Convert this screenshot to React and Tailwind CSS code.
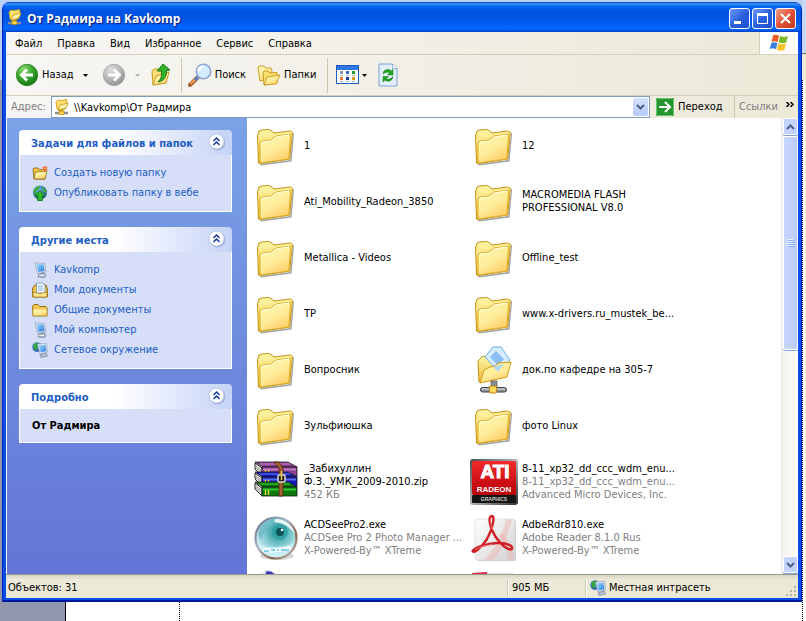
import React, { useState } from 'react';

const taskLinks = [
  { label: 'Создать новую папку', icon: 'newFolder' },
  { label: 'Опубликовать папку в вебе', icon: 'publish' },
];

const placeLinks = [
  { label: 'Kavkomp', icon: 'computer' },
  { label: 'Мои документы', icon: 'documents' },
  { label: 'Общие документы', icon: 'folder' },
  { label: 'Мой компьютер', icon: 'computer' },
  { label: 'Сетевое окружение', icon: 'network' },
];

const files = [
  { lines: ['1'], icon: 'folder' },
  { lines: ['12'], icon: 'folder' },
  { lines: ['Ati_Mobility_Radeon_3850'], icon: 'folder' },
  { lines: ['MACROMEDIA FLASH', 'PROFESSIONAL V8.0'], icon: 'folder' },
  { lines: ['Metallica - Videos'], icon: 'folder' },
  { lines: ['Offline_test'], icon: 'folder' },
  { lines: ['TP'], icon: 'folder' },
  { lines: ['www.x-drivers.ru_mustek_be...'], icon: 'folder' },
  { lines: ['Вопросник'], icon: 'folder' },
  { lines: ['док.по кафедре на 305-7'], icon: 'shared' },
  { lines: ['Зульфиюшка'], icon: 'folder' },
  { lines: ['фото Linux'], icon: 'folder' },
  { lines: ['_Забихуллин', 'Ф.З._УМК_2009-2010.zip'], info: ['452 КБ'], icon: 'rar' },
  {
    lines: ['8-11_xp32_dd_ccc_wdm_enu...'],
    info: ['8-11_xp32_dd_ccc_wdm_enu...', 'Advanced Micro Devices, Inc.'],
    icon: 'ati',
  },
  {
    lines: ['ACDSeePro2.exe'],
    info: ['ACDSee Pro 2 Photo Manager ...', 'X-Powered-By™ XTreme'],
    icon: 'acdsee',
  },
  {
    lines: ['AdbeRdr810.exe'],
    info: ['Adobe Reader 8.1.0 Rus', 'X-Powered-By™ XTreme'],
    icon: 'adobe',
  },
  { lines: [], icon: 'disc' },
  { lines: [], icon: 'redBox' },
];

// Gradients shared by all the icons
const IconDefs = () => (
  <svg className="absolute h-0 w-0" aria-hidden="true">
    <defs>
      <linearGradient id="front" x1="0" y1="0" x2="0.6" y2="1">
        <stop offset="0" stopColor="#fffbb4" />
        <stop offset="0.6" stopColor="#ffec9a" />
        <stop offset="1" stopColor="#ffcf6a" />
      </linearGradient>
      <linearGradient id="back" x1="0" y1="0" x2="0" y2="1">
        <stop offset="0" stopColor="#fff7a8" />
        <stop offset="1" stopColor="#eebb3e" />
      </linearGradient>
      <radialGradient id="green" cx="0.35" cy="0.25" r="0.8">
        <stop offset="0" stopColor="#8fdc78" />
        <stop offset="0.5" stopColor="#36a929" />
        <stop offset="1" stopColor="#15700f" />
      </radialGradient>
      <radialGradient id="grey" cx="0.35" cy="0.25" r="0.8">
        <stop offset="0" stopColor="#dedede" />
        <stop offset="0.6" stopColor="#b3b3b3" />
        <stop offset="1" stopColor="#8f8f8f" />
      </radialGradient>
      <linearGradient id="screen" x1="0" y1="0" x2="1" y2="1">
        <stop offset="0" stopColor="#9fdcff" />
        <stop offset="1" stopColor="#2a7be0" />
      </linearGradient>
      <radialGradient id="globe" cx="0.4" cy="0.3" r="0.8">
        <stop offset="0" stopColor="#6fb7f2" />
        <stop offset="1" stopColor="#123f9a" />
      </radialGradient>
      <radialGradient id="eye" cx="0.55" cy="0.35" r="0.7">
        <stop offset="0" stopColor="#1f8c90" />
        <stop offset="0.35" stopColor="#5fb9bf" />
        <stop offset="0.7" stopColor="#b5e2e8" />
        <stop offset="1" stopColor="#f4fcfc" />
      </radialGradient>
      <linearGradient id="rim" x1="0" y1="0" x2="1" y2="1">
        <stop offset="0" stopColor="#5a6a80" />
        <stop offset="0.4" stopColor="#aab4c4" />
        <stop offset="0.7" stopColor="#8a6048" />
        <stop offset="1" stopColor="#d0d4dc" />
      </linearGradient>
      <linearGradient id="atiRed" x1="0" y1="0" x2="0" y2="1">
        <stop offset="0" stopColor="#f02a2a" />
        <stop offset="1" stopColor="#b80008" />
      </linearGradient>
      <linearGradient id="steel" x1="0" y1="0" x2="1" y2="1">
        <stop offset="0" stopColor="#4a4a4a" />
        <stop offset="0.5" stopColor="#b4b4b4" />
        <stop offset="1" stopColor="#2e2e2e" />
      </linearGradient>
      <linearGradient id="paper" x1="0" y1="0" x2="1" y2="1">
        <stop offset="0" stopColor="#ffffff" />
        <stop offset="1" stopColor="#d2d2d2" />
      </linearGradient>
    </defs>
  </svg>
);

const BigFolder = () => (
  <svg viewBox="0 0 48 48" className="h-12 w-12">
    <path d="M8 42 L38 38 L41 11 L42 12 L39.500 39.500 L9 43.500Z" fill="#666" opacity=".6" />
    <path
      d="M5.500 14 L7 9 L10 8 L17 7.500 L19 8.500 L22 11 L38 9 L40.500 10.500 L37.500 37 L8 41.500 L6.500 41Z"
      fill="url(#back)"
      stroke="#c4930f"
      strokeLinejoin="round"
    />
    <path d="M8 41 L8 21 L10 19 L19 18 L24 14 L38.500 12 L37 37Z" fill="url(#front)" stroke="#d9a91e" strokeWidth=".9" />
    <path d="M9 22 L10.500 20 L19.500 19 L24.500 15 L37 13" fill="none" stroke="#fffde6" />
  </svg>
);

const SharedFolder = () => (
  <svg viewBox="0 0 48 48" className="h-12 w-12">
    <path d="M8 15 L13 10 L18 12 L33 14 L36 21 L32 32 L12 36 L9 36Z" fill="url(#back)" stroke="#c4930f" />
    <path d="M23 1 L31 1 L40 14 L28 25 L15 11Z" fill="#d6ecff" stroke="#69aee8" />
    <path d="M26 5 L34 13 L28 20 L20 11Z" fill="#8cc0f4" />
    <path d="M10 37 L14 24 L20 21 L25 20 L29 17 L41 16 L37 31Z" fill="url(#front)" stroke="#d39c14" />
    <path d="M23 21 L34 18 L28 26Z" fill="#a7d4f8" opacity=".9" />
    <path d="M21 35 h6 v7 h-6z" fill="#8a8f96" stroke="#4f545a" strokeWidth=".7" />
    <rect x="10.500" y="41.500" width="26" height="4.500" rx="2" fill="#8b9098" stroke="#3e4248" />
    <path d="M12 43 h23" stroke="#e6e8ea" />
    <rect x="19.500" y="40" width="7" height="7" rx="1" fill="#ffd95c" stroke="#b98512" />
  </svg>
);

const RarIcon = () => {
  const books = [
    { y: 2, top: '#c07ac4', base: '#8d3f91' },
    { y: 12, top: '#5a6fff', base: '#1418b0' },
    { y: 22, top: '#35c435', base: '#087a08' },
  ];
  return (
    <svg viewBox="0 0 48 48" className="h-12 w-12">
      {books.map(({ y, top, base }) => (
        <g key={y}>
          <path d={`M3 ${y + 3} L10 ${y + 8} L10 ${y + 16} L3 ${y + 9}Z`} fill="#e9e9e9" stroke="#222" />
          <path d={`M4 ${y + 6} L10 ${y + 11} M4 ${y + 8} L10 ${y + 13}`} stroke="#777" strokeWidth=".7" />
          <path d={`M3 ${y + 2} L36 ${y + 2} L45 ${y + 7} L11 ${y + 7}Z`} fill={base} stroke="#222" strokeWidth=".8" />
          <path d={`M8 ${y + 4} L38 ${y + 4}`} stroke={top} strokeWidth="1.200" />
          <rect x="10" y={y + 7} width="35" height="9" fill={base} stroke="#1a1a1a" strokeWidth=".8" />
          <path d={`M11 ${y + 9.500} h33`} stroke={top} strokeWidth="2" />
          <path d={`M13.500 ${y + 10} v5 M16.500 ${y + 10} v5`} stroke="#f4dc30" strokeWidth="1.400" />
        </g>
      ))}
      <path d="M22 4 h5 l4 6 v28 h-4 v-28z" fill="#a0602f" stroke="#4b270f" strokeWidth=".8" />
      <rect x="26" y="17" width="7" height="7" rx="1" fill="#222" stroke="#d9d9d9" strokeWidth="1.500" />
      <path d="M29.500 13 v9" stroke="#e6c35a" strokeWidth="1.500" />
    </svg>
  );
};

const AtiIcon = () => (
  <svg viewBox="0 0 48 48" className="h-12 w-12">
    <rect x="0" y="1" width="48" height="46" rx="3" fill="url(#steel)" />
    <rect x="2" y="3" width="44" height="34" rx="2" fill="url(#atiRed)" />
    <rect x="2" y="37" width="44" height="8" rx="1" fill="#151515" />
    <text x="25" y="20" textAnchor="middle" fontSize="19" fontWeight="bold" fill="#fff" stroke="#fff" className="font-['Liberation_Sans',sans-serif]">
      ATI
    </text>
    <text x="24" y="34" textAnchor="middle" fontSize="8" fontWeight="bold" fill="#fff" className="font-['Liberation_Sans',sans-serif]">
      RADEON
    </text>
    <text x="24" y="43" textAnchor="middle" fontSize="5" fontWeight="bold" fill="#ccc" className="font-['Liberation_Sans',sans-serif]">
      GRAPHICS
    </text>
  </svg>
);

const AcdSeeIcon = () => (
  <svg viewBox="0 0 48 48" className="h-12 w-12">
    <ellipse cx="25" cy="42" rx="17" ry="4" fill="#999" opacity=".4" />
    <circle cx="24" cy="24" r="20.500" fill="url(#eye)" stroke="url(#rim)" strokeWidth="2.200" />
    <path d="M7 15 C11 8 17 5 24 4.500 C18 9 12 16 9 26 C6 23 6 19 7 15Z" fill="#6fb9c4" opacity=".8" />
    <path d="M24 5 C34 5 41 12 43 20 C38 13 32 9 22 8Z" fill="#fff" opacity=".85" />
    <circle cx="28" cy="18" r="8" fill="#2b9da0" opacity=".75" />
    <circle cx="28" cy="18" r="4" fill="#0d5257" />
    <circle cx="30" cy="16" r="1.300" fill="#e8ffff" />
    <path d="M7 31 C16 34 32 34 42 29 C39 38 31 43 24 43 C17 43 10 39 7 31Z" fill="#c9f0f8" opacity=".85" />
    <path d="M11 36 C20 37 30 36 39 34" fill="none" stroke="#fff" strokeWidth="4" opacity=".8" />
    <path d="M12 37 h5 M19 36 h4 M25 36 h2 M29 36 h8" fill="none" stroke="#6cc6e8" strokeWidth="2" opacity=".8" />
  </svg>
);

const AdobeIcon = () => (
  <svg viewBox="0 0 48 48" className="h-12 w-12">
    <rect x="7" y="6" width="39" height="41" rx="2" fill="#999" opacity=".5" />
    <rect x="5" y="5" width="40" height="41" rx="2" fill="url(#paper)" stroke="#d8d8d8" strokeWidth=".7" />
    <path d="M36 6 C32 22 24 36 14 46 L24 46 C31 37 36 27 42 6Z" fill="#f0a9a4" opacity=".4" />
    <path d="M28 20 C34 28 38 37 38 46 L44 46 C43 36 39 26 33 20Z" fill="#f0a9a4" opacity=".35" />
    <path
      d="M22 2 C18.500 2 19 9 22 16 C26 26 35 35 41 35.500 C45 33 38 28.500 27 29 C16 29.500 4 34 2.500 37 C4 40 12 33 17 25 C22 16 25.500 3 22 2Z"
      fill="none"
      stroke="#cf1f26"
      strokeWidth="2.400"
      strokeLinejoin="round"
    />
    <path d="M21 4 C20 8 21 12 23 16 M5 36 C9 33 16 31 22 30.500" fill="none" stroke="#f58a86" strokeWidth=".8" />
  </svg>
);

const DiscIcon = () => (
  <svg viewBox="0 0 48 48" className="h-12 w-12">
    <circle cx="16" cy="10" r="9" fill="#3436b4" stroke="#8f9ddb" />
    <path d="M8 6 A9 9 0 0 1 14 1 L13 7Z" fill="#fff" />
  </svg>
);

const RedBoxIcon = () => (
  <svg viewBox="0 0 48 48" className="h-12 w-12">
    <path d="M2 3 L17 2 L18 20 L2 20Z" fill="#d92a44" />
    <path d="M18 3.500 h26" stroke="#e4e4e4" />
  </svg>
);

const bigIcons = {
  folder: BigFolder,
  shared: SharedFolder,
  rar: RarIcon,
  ati: AtiIcon,
  acdsee: AcdSeeIcon,
  adobe: AdobeIcon,
  disc: DiscIcon,
  redBox: RedBoxIcon,
};

const SharedSmall = () => (
  <svg viewBox="0 0 16 16" className="h-4 w-4 shrink-0">
    <path d="M2 3 L4 1 L7 1.500 L12.500 .500 L13.500 5 L11 10 L5 12 L3 10Z" fill="#ffe070" stroke="#c8940f" strokeWidth=".8" />
    <path d="M4 11 L6 6 L14 4 L12 9Z" fill="#fff3ac" stroke="#c8940f" strokeWidth=".8" />
    <path d="M8 11 v3" stroke="#c8940f" strokeWidth="2" />
    <path d="M1 14 h13" stroke="#8d8f94" strokeWidth="2.400" />
    <rect x="5" y="12" width="5" height="3.600" fill="#ffd84f" stroke="#a87708" strokeWidth=".6" />
  </svg>
);

const NewFolderIcon = () => (
  <svg viewBox="0 0 16 16" className="h-4 w-4">
    <path d="M1 4 L2 3 L6 3 L7 4.500 L13 4.500 L13 14 L2 14Z" fill="#f4c651" stroke="#8d6a13" strokeWidth=".9" />
    <path d="M2 14 L3.500 7 L15 6 L13 14Z" fill="url(#front)" stroke="#8d6a13" strokeWidth=".8" />
    <path d="M12.500 0 L13.300 2.200 L15.500 1.500 L14.500 3.500 L16 5 L13.800 5 L12.800 7 L12 5 L9.800 5 L11.300 3.500 L10.300 1.500 L12 2.200Z" fill="#f0522a" />
    <circle cx="12.700" cy="3.500" r="1" fill="#ffcf4a" />
  </svg>
);

const PublishIcon = () => (
  <svg viewBox="0 0 16 16" className="h-4 w-4">
    <circle cx="8" cy="7.500" r="7" fill="url(#globe)" />
    <path d="M1.500 6 C3 2 6 1 8 1 L7 4 L4 6 L5 9 L3 10Z M10 2 C13 3 15 6 14.500 9 L11 6Z" fill="#3fae3b" />
    <path d="M8 5.500 L13.500 11 L10.500 11 L10.500 15.500 L5.500 15.500 L5.500 11 L2.500 11Z" fill="#2fb52c" stroke="#0d6a12" strokeWidth=".8" />
  </svg>
);

const ComputerIcon = () => (
  <svg viewBox="0 0 16 16" className="h-4 w-4">
    <path d="M3 .800 L12.500 1.500 L14 10 L5.500 11.500Z" fill="#dfe6f0" stroke="#8f9db4" strokeWidth=".7" />
    <path d="M4.300 2 L11.500 2.600 L12.600 9 L6.300 10Z" fill="url(#screen)" />
    <path d="M7 12 L12 10.800 L14 13.500 L12.500 15.500 L6 15Z" fill="#aab6ca" stroke="#5f6b80" strokeWidth=".6" />
    <path d="M7 13.300 L12 13.500" stroke="#f3f6fa" />
  </svg>
);

const DocumentsIcon = () => (
  <svg viewBox="0 0 16 16" className="h-4 w-4">
    <path d="M.700 6 L3 3 L14 3 L15.300 7 L15.300 15 L.700 15Z" fill="#f4c54b" stroke="#8b660c" />
    <path d="M4.500 1 L10.500 1 L13 3.500 L13 11 L4.500 11Z" fill="#f5faff" stroke="#6d8fbd" strokeWidth=".8" />
    <path d="M6 4 h5 M6 6 h5 M6 8 h5" stroke="#6ca1dc" strokeWidth=".8" />
    <path d="M1 10.500 h4 l1 1 h4 l1 -1 h4 v4.500 h-14z" fill="#ffe387" stroke="#a87b10" strokeWidth=".7" />
  </svg>
);

const SmallFolderIcon = () => (
  <svg viewBox="0 0 16 16" className="h-4 w-4">
    <path d="M.700 4 L2 2.500 L6 2.500 L7.500 4.500 L14 4.500 L15 6 L15 14 L1 14Z" fill="#f5cb55" stroke="#94700f" />
    <path d="M1.500 13.500 L1.500 7.500 L14.500 7.500 L14.500 13.500Z" fill="url(#front)" />
  </svg>
);

const NetworkIcon = () => (
  <svg viewBox="0 0 16 16" className="h-4 w-4 shrink-0">
    <circle cx="5" cy="5" r="4.800" fill="url(#globe)" />
    <path d="M1 4 C2 1 5 0 7 1 L5 4 L6 7 L3 8Z" fill="#35a436" />
    <path d="M5.500 2 L14.500 1.500 L15.500 10 L8 12Z" fill="#e8eef6" stroke="#8e9db5" strokeWidth=".7" />
    <path d="M6.800 3.200 L13.500 2.700 L14.400 9.200 L8.700 10.600Z" fill="url(#screen)" />
    <path d="M8 13 L14 11 L15.500 14 L9 15.500Z" fill="#b9c3d3" stroke="#66718a" strokeWidth=".6" />
  </svg>
);

const smallIcons = {
  newFolder: NewFolderIcon,
  publish: PublishIcon,
  computer: ComputerIcon,
  documents: DocumentsIcon,
  folder: SmallFolderIcon,
  network: NetworkIcon,
};

const RoundArrow = ({ forward }) => (
  <svg viewBox="0 0 24 24" className="h-6 w-6">
    <circle cx="12" cy="12" r="10.700" fill={forward ? 'url(#grey)' : 'url(#green)'} stroke={forward ? '#a3a3a3' : '#2b7f22'} strokeWidth=".8" />
    <path
      d={forward ? 'M6 12 H17 M12 6.500 L17.500 12 L12 17.500' : 'M18 12 H7 M12 6.500 L6.500 12 L12 17.500'}
      fill="none"
      stroke="#fff"
      strokeWidth="2.800"
    />
  </svg>
);

const UpIcon = () => (
  <svg viewBox="0 0 24 24" className="h-6 w-6">
    <path d="M3 8 L5 6 L9 6 L10 8 L16 8 L16 20 L4 22Z" fill="#fbe07a" stroke="#c79a20" />
    <path d="M4 22 L7 13 L20 9 L17 20Z" fill="url(#front)" stroke="#c79a20" />
    <path d="M14 1 L21 7 L17.500 7.500 C17.500 14 15 18 9 19 C12 16 13 13 12.500 8 L8 8Z" fill="#35b12c" stroke="#14700f" strokeWidth=".9" />
  </svg>
);

const SearchIcon = () => (
  <svg viewBox="0 0 24 24" className="h-6 w-6">
    <path d="M10 14 L2 22" stroke="#a85a28" strokeWidth="4" strokeLinecap="round" />
    <path d="M10 13.500 L3 20.500" stroke="#f2a261" strokeWidth="2" strokeLinecap="round" />
    <path d="M10 14 L7 17" stroke="#5f7fb8" strokeWidth="3.500" />
    <circle cx="15.500" cy="8.500" r="7.200" fill="#d3ecff" stroke="#8fa6d6" strokeWidth="1.600" />
    <path d="M10.500 8 A5 5 0 0 1 15 3.500" stroke="#fff" strokeWidth="2.500" fill="none" />
  </svg>
);

const FoldersIcon = () => (
  <svg viewBox="0 0 24 24" className="h-6 w-6">
    <path d="M1 5 L2 3 L7 3 L8.500 5 L14 5 L15 8 L13 16 L3 18Z" fill="url(#front)" stroke="#c99c20" />
    <path d="M6 10 L7 8 L11 8 L13 10 L20 9.500 L20 20 L7 22Z" fill="#fbdc70" stroke="#c99c20" />
    <path d="M7 22 L10 14 L23 12 L19 21Z" fill="url(#front)" stroke="#c99c20" />
  </svg>
);

const ViewsIcon = () => (
  <svg viewBox="0 0 24 20" className="h-5 w-6">
    <rect x=".500" y=".500" width="22" height="18" fill="#fff" stroke="#1c5bc0" />
    <rect x="1" y="1" width="21" height="4" fill="#2f77e4" />
    <rect x="4" y="6" width="3" height="3" fill="#8a93b8" />
    <rect x="10" y="6" width="3" height="3" fill="#3a62c8" />
    <rect x="16" y="6" width="3" height="3" fill="#1f9a2a" />
    <rect x="4" y="12" width="3" height="3" fill="#f0763a" />
    <rect x="10" y="12" width="3" height="3" fill="#173d9a" />
    <rect x="16" y="12" width="3" height="3" fill="#d79b10" />
    <path d="M4 10.500 h3 M10 10.500 h3 M16 10.500 h3 M4 16.500 h3 M10 16.500 h3 M16 16.500 h3" stroke="#b9b9b9" />
  </svg>
);

const RefreshIcon = () => (
  <svg viewBox="0 0 20 24" className="h-6 w-5">
    <path d="M1 1 H14.500 L19 5.500 V23 H1Z" fill="#e4effc" stroke="#7a9fd6" />
    <path d="M14.500 1 V5.500 H19" fill="#fff" stroke="#7a9fd6" strokeWidth=".8" />
    <path d="M5 11 C5 6.500 11 5 13 8 L15 6.500 L15 12 L9.500 12 L11.500 10 C10 8.500 7.500 9 5 11Z" fill="#22a522" stroke="#11780f" strokeWidth=".5" />
    <path d="M15 13.500 C15 18 9 19.500 7 17 L5 19 L5 13.500 L10.500 13.500 L8.500 15.500 C10 17 12.500 16 15 13.500Z" fill="#22a522" stroke="#11780f" strokeWidth=".5" />
  </svg>
);

const WindowsFlag = () => (
  <svg viewBox="0 0 20 18" className="h-[18px] w-5">
    <path d="M4 1.500 C6 .300 8 .500 10 1.700 L8.600 8 C6.600 7 4.600 6.800 2.500 8Z" fill="#ee5a24" />
    <path d="M11 2 C13 3 16 3.200 19 2 L17.300 8.500 C15 9.600 12 9.400 9.600 8.400Z" fill="#7cbb2c" />
    <path d="M2.300 9 C4.300 7.800 6.400 8 8.400 9 L7 15.300 C5 14.200 3 14 .700 15Z" fill="#3b7fdc" />
    <path d="M9.400 9.400 C11.500 10.400 14.500 10.600 17 9.500 L15.400 16 C13 17.200 10 17 7.800 15.800Z" fill="#fcc32a" />
  </svg>
);

const DownArrow = ({ muted }) => (
  <svg viewBox="0 0 5 3" className="h-[3px] w-[5px]">
    <path d="M0 0 H5 L2.500 3Z" fill={muted ? '#b8b5a3' : '#000'} />
  </svg>
);

const Chevron = ({ up }) => (
  <svg viewBox="0 0 9 6" className="h-[6px] w-[9px]">
    <path d={up ? 'M1 5 L4.500 1.500 L8 5' : 'M1 1 L4.500 4.500 L8 1'} fill="none" stroke="#4d6185" strokeWidth="2" />
  </svg>
);

const Separator = () => <div className="h-[35px] w-px bg-[#cbc8b0]" />;

const SidePanel = ({ title, children }) => {
  const [open, setOpen] = useState(true);
  return (
    <section>
      <button
        type="button"
        onClick={() => setOpen(!open)}
        className="flex h-[25px] w-full items-center justify-between rounded-t-[4px] bg-linear-to-r from-white from-45% to-[#c6d3f7] pr-[6px] pl-3 font-bold text-[#215dc6]"
      >
        <span className="pt-1 whitespace-nowrap">{title}</span>
        <svg viewBox="0 0 18 18" className="mb-[2px] h-[18px] w-[18px] shrink-0">
          <circle cx="9.500" cy="9.500" r="8" fill="#8d9fd0" opacity=".6" />
          <circle cx="8.500" cy="8.500" r="7.500" fill="#fff" stroke="#b9c6ea" />
          <path d="M5.500 8 L8.500 5 L11.500 8 M5.500 12 L8.500 9 L11.500 12" fill="none" stroke="#12379c" strokeWidth="1.500" />
        </svg>
      </button>
      {open && <div className="border border-t-0 border-white bg-[#d6dff7]">{children}</div>}
    </section>
  );
};

const LinkList = ({ links }) => (
  <ul className="px-3 py-2">
    {links.map((link) => {
      const Icon = smallIcons[link.icon];
      return (
        <li key={link.label}>
          <a href="#" className="flex h-5 items-center gap-[6px] whitespace-nowrap text-[#215dc6] hover:underline">
            <Icon />
            {link.label}
          </a>
        </li>
      );
    })}
  </ul>
);

const FileItem = ({ file }) => {
  const Icon = bigIcons[file.icon];
  return (
    <li>
      <a href="#" className="flex h-14 items-center gap-1 pl-[5px] whitespace-nowrap">
        <Icon />
        <span className="pb-[2px] leading-[13px]">
          {file.lines.map((line) => (
            <span key={line} className="block">{line}</span>
          ))}
          {file.info?.map((line) => (
            <span key={line} className="block text-[#808080]">{line}</span>
          ))}
        </span>
      </a>
    </li>
  );
};

const TitleBar = () => (
  <header className="flex h-[30px] items-center gap-1 rounded-t-[7px] bg-[linear-gradient(180deg,#0340b8_0%,#3d95ff_6%,#0568f0_14%,#0054e3_28%,#0055e5_60%,#0066ff_85%,#0060f4_93%,#003dc0_100%)] pr-[5px] pl-1">
    <SharedSmall />
    <h1 className="flex-1 truncate pt-[3px] font-['Open_Sans','Noto_Sans',sans-serif] text-[12px] font-bold text-white [text-shadow:1px_1px_1px_#0a1883]">
      От Радмира на Kavkomp
    </h1>
    <div className="flex gap-[2px] pt-[3px]">
      <button type="button" aria-label="Свернуть" className="flex h-[21px] w-[21px] items-center justify-center rounded-[3px] border border-white bg-linear-to-br from-[#6c9bf5] via-[#2c61dc] to-[#1c4fd0]">
        <svg viewBox="0 0 19 19" className="h-[19px] w-[19px]">
          <rect x="4" y="12" width="7" height="3" fill="#fff" />
        </svg>
      </button>
      <button type="button" aria-label="Развернуть" className="flex h-[21px] w-[21px] items-center justify-center rounded-[3px] border border-white bg-linear-to-br from-[#6c9bf5] via-[#2c61dc] to-[#1c4fd0]">
        <svg viewBox="0 0 19 19" className="h-[19px] w-[19px]">
          <rect x="4.500" y="4.500" width="10" height="10" fill="none" stroke="#fff" />
          <rect x="4" y="4" width="11" height="3" fill="#fff" />
        </svg>
      </button>
      <button type="button" aria-label="Закрыть" className="flex h-[21px] w-[21px] items-center justify-center rounded-[3px] border border-white bg-linear-to-br from-[#f0a088] via-[#e0533a] to-[#c2340e]">
        <svg viewBox="0 0 19 19" className="h-[19px] w-[19px]">
          <path d="M5 5 L14 14 M14 5 L5 14" stroke="#fff" strokeWidth="2.200" />
        </svg>
      </button>
    </div>
  </header>
);

const MenuBar = () => (
  <div className="flex h-[23px] border-b border-[#d2cfba]">
    <nav className="flex flex-1 items-center gap-[15px] pt-[2px] pl-[9px]">
      {['Файл', 'Правка', 'Вид', 'Избранное', 'Сервис', 'Справка'].map((item) => (
        <button key={item} type="button">{item}</button>
      ))}
    </nav>
    <div className="flex w-[39px] items-center justify-center border-l border-[#d2cfba] bg-white">
      <WindowsFlag />
    </div>
  </div>
);

const ToolBar = () => (
  <div className="flex h-[41px] items-center border-b border-[#d2cfba] pl-[9px]">
    <button type="button" className="flex items-center gap-[3px]">
      <RoundArrow />
      Назад
    </button>
    <button type="button" aria-label="Список переходов назад" className="pr-[14px] pl-[9px]">
      <DownArrow />
    </button>
    <button type="button" aria-label="Вперед" disabled>
      <RoundArrow forward />
    </button>
    <button type="button" aria-label="Список переходов вперед" disabled className="px-[9px]">
      <DownArrow muted />
    </button>
    <button type="button" aria-label="Вверх" className="pr-2">
      <UpIcon />
    </button>
    <Separator />
    <button type="button" className="flex items-center gap-[3px] pr-[11px] pl-[6px]">
      <SearchIcon />
      Поиск
    </button>
    <button type="button" className="flex items-center gap-[3px] pr-[11px]">
      <FoldersIcon />
      Папки
    </button>
    <Separator />
    <button type="button" aria-label="Вид" className="flex items-center gap-[2px] pr-[11px] pl-2">
      <ViewsIcon />
      <DownArrow />
    </button>
    <button type="button" aria-label="Обновить">
      <RefreshIcon />
    </button>
  </div>
);

const AddressBar = () => {
  const [address, setAddress] = useState('\\\\Kavkomp\\От Радмира');
  return (
    <div className="flex h-[22px] items-stretch">
      <label htmlFor="address" className="flex w-[45px] items-center pt-px pl-[5px] text-[#808080]">
        Адрес:
      </label>
      <div className="flex flex-1 items-center gap-1 border border-[#7f9db9] bg-white pl-[2px]">
        <SharedSmall />
        <input
          id="address"
          value={address}
          onChange={(e) => setAddress(e.target.value)}
          className="min-w-0 flex-1 bg-transparent pt-[2px] outline-none"
        />
        <button type="button" aria-label="Показать адреса" className="mr-px flex h-[18px] w-[15px] items-center justify-center rounded-[2px] bg-linear-to-b from-[#d5e1fd] to-[#b5caf8]">
          <Chevron />
        </button>
      </div>
      <button type="button" className="flex w-[84px] items-center gap-1 pl-[6px]">
        <svg viewBox="0 0 18 18" className="h-[18px] w-[18px]">
          <rect width="18" height="18" rx="1" fill="#23952c" />
          <rect x=".500" y=".500" width="17" height="17" rx="1" fill="none" stroke="#6fc46f" />
          <path d="M3 9 H13 M9 4 L14 9 L9 14" fill="none" stroke="#fff" strokeWidth="2" />
        </svg>
        Переход
      </button>
      <div className="flex w-16 justify-between border-l border-[#cbc8b0] px-1">
        <span className="self-center text-[#808080]">Ссылки</span>
        <button type="button" aria-label="Другие ссылки" className="h-3 pt-1">
          <svg viewBox="0 0 8 5" className="h-[5px] w-2">
            <path d="M.500 0 L3 2.500 L.500 5 M4.500 0 L7 2.500 L4.500 5" fill="none" stroke="#000" strokeWidth="1.500" />
          </svg>
        </button>
      </div>
    </div>
  );
};

const ScrollBar = () => (
  <div className="flex w-[17px] flex-col items-center border-l border-[#eeede5] bg-linear-to-r from-[#f3f1ec] to-[#fefefb]">
    <button type="button" aria-label="Прокрутить вверх" className="flex h-[17px] w-[15px] items-center justify-center rounded-[2px] border border-white bg-[#c3d3fd] shadow-[0_1px_0_#7fa3dd]">
      <Chevron up />
    </button>
    <div className="mt-px flex h-[47%] w-[15px] items-center justify-center rounded-[2px] border border-white bg-linear-to-r from-[#c9d7fd] to-[#b9ccfa] shadow-[0_1px_0_#7fa3dd]">
      <svg viewBox="0 0 7 8" className="h-2 w-[7px]">
        <path d="M0 .500 h6 M0 2.500 h6 M0 4.500 h6 M0 6.500 h6" stroke="#eef4fe" />
        <path d="M1 1.500 h6 M1 3.500 h6 M1 5.500 h6 M1 7.500 h6" stroke="#8cb0f8" />
      </svg>
    </div>
    <div className="flex-1" />
    <button type="button" aria-label="Прокрутить вниз" className="mb-px flex h-[17px] w-[15px] items-center justify-center rounded-[2px] border border-white bg-[#c3d3fd] shadow-[0_1px_0_#7fa3dd]">
      <Chevron />
    </button>
  </div>
);

const StatusBar = () => (
  <footer className="flex h-[23px] items-center bg-linear-to-b from-[#d8d5c4] from-0% via-[#ece9d8] via-20% to-[#ece9d8] pt-[3px]">
    <span className="flex-1 pl-[2px]">Объектов: 31</span>
    <span className="w-[78px] border-l border-[#cbc8b0] pl-1 shadow-[inset_1px_0_0_#fff]">905 МБ</span>
    <span className="flex w-[201px] items-center gap-[3px] border-l border-[#cbc8b0] pl-1 shadow-[inset_1px_0_0_#fff]">
      <NetworkIcon />
      Местная интрасеть
    </span>
    <svg viewBox="0 0 12 12" className="h-3 w-3 self-end">
      <g fill="#b8b4a0">
        <rect x="8" y="0" width="2" height="2" />
        <rect x="4" y="4" width="2" height="2" />
        <rect x="8" y="4" width="2" height="2" />
        <rect x="0" y="8" width="2" height="2" />
        <rect x="4" y="8" width="2" height="2" />
        <rect x="8" y="8" width="2" height="2" />
      </g>
    </svg>
  </footer>
);

// Strips of the windows that lie behind the explorer window
const Backdrop = () => (
  <div className="absolute inset-0 flex flex-col">
    <div className="flex h-20 justify-end bg-[#b9cff5]">
      <div className="flex w-1 flex-col">
        <div className="h-[53px] bg-[#c6d8f8]" />
        <div className="h-px bg-[#716f64]" />
        <div className="flex-1 bg-[#ece9d8]" />
      </div>
    </div>
    <div className="flex flex-1">
      <div className="w-[66px] border-r border-black bg-[#9198ad]" />
      <div className="w-[114px] border-r border-dotted border-black bg-white" />
      <div className="flex-1 bg-white" />
      <div className="w-1 border-l border-dotted border-black bg-white" />
    </div>
  </div>
);

const App = () => (
  <div className="relative flex h-screen flex-col overflow-hidden font-['DejaVu_Sans_Condensed','DejaVu_Sans',sans-serif] text-[11px] text-black">
    <IconDefs />
    <Backdrop />
    <main className="relative mt-[2px] mr-1 mb-[19px] ml-[2px] flex min-h-0 flex-1 flex-col rounded-t-[8px] border-x border-b-2 border-[#0022c0] border-b-[#0018a0] bg-[#0831d9]">
      <TitleBar />
      <div className="flex min-h-0 flex-1 flex-col border-x-3 border-b-2 border-[#0a4ce6] bg-[#ece9d8]">
        <div className="bg-linear-to-r from-[#f7f6f4] to-[#ece9d8]">
          <MenuBar />
          <ToolBar />
          <AddressBar />
        </div>
        <div className="flex min-h-0 flex-1 border-b border-[#9d9a8c] bg-white pl-px">
          <aside className="flex w-60 shrink-0 flex-col gap-[15px] bg-linear-to-b from-[#7ba2e7] to-[#6375d6] pt-3 pr-[15px] pl-3">
            <SidePanel title="Задачи для файлов и папок">
              <LinkList links={taskLinks} />
            </SidePanel>
            <SidePanel title="Другие места">
              <LinkList links={placeLinks} />
            </SidePanel>
            <SidePanel title="Подробно">
              <p className="px-3 pt-[9px] pb-[7px] font-bold">От Радмира</p>
            </SidePanel>
          </aside>
          <ul className="grid flex-1 auto-rows-[56px] grid-cols-[repeat(auto-fill,218px)] overflow-hidden">
            {files.map((file, i) => (
              <FileItem key={i} file={file} />
            ))}
          </ul>
          <ScrollBar />
        </div>
        <StatusBar />
      </div>
    </main>
  </div>
);

export default App;
